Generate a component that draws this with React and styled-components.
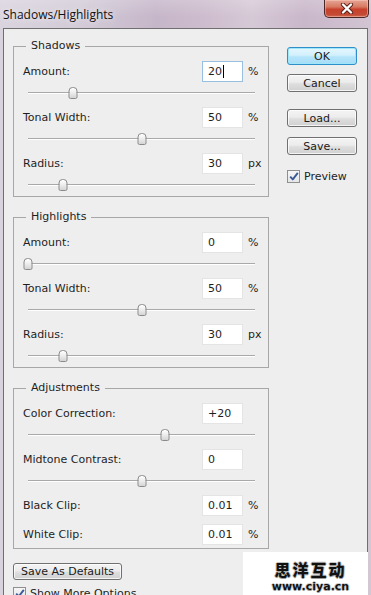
import React from 'react';
import styled, { createGlobalStyle } from 'styled-components';

const UI_FONT = `"DejaVu Sans", "Liberation Sans", sans-serif`;

const GlobalStyle = createGlobalStyle`
  html, body { margin: 0; padding: 0; }
  body {
    width: 371px;
    height: 595px;
    overflow: hidden;
    background: #d5cad6;
    font-family: ${UI_FONT};
  }
`;

const Window = styled.div`
  position: relative;
  width: 371px;
  height: 595px;
  display: flex;
  flex-direction: column;
  overflow: hidden;
  background: linear-gradient(90deg, #d8d2dc 0%, #d2c8d4 50%, #d3c7d4 100%);
`;

const TitleBar = styled.div`
  flex: none;
  height: 28px;
  display: flex;
  align-items: flex-start;
  justify-content: space-between;
  background:
    linear-gradient(180deg, rgba(255,255,255,0.18) 0%, rgba(255,255,255,0) 60%),
    linear-gradient(90deg, #d9d4de 0%, #d3ccd8 22%, #c6b6c9 42%, #cdbccd 55%, #d6c9d6 68%, #c9b7ca 82%, #d2c4d3 100%);
`;

const Title = styled.div`
  padding: 1px 0 0 3px;
  line-height: 28px;
  font-family: "Open Sans", "Liberation Sans", sans-serif;
  font-size: 12px;
  color: #111;
  text-shadow: 0 0 6px rgba(255, 255, 255, 0.9);
`;

const CloseButton = styled.div`
  width: 45px;
  height: 18px;
  margin-right: 2px;
  box-sizing: border-box;
  border: 1px solid #4a2626;
  border-top: none;
  border-radius: 0 0 5px 5px;
  background: linear-gradient(180deg, #e5a594 0%, #d87a63 40%, #c7412c 55%, #c44a34 85%, #d06a52 100%);
  box-shadow: inset 0 0 0 1px rgba(255, 210, 200, 0.45);
  display: flex;
  align-items: center;
  justify-content: center;
`;

const Frame = styled.div`
  flex: 1;
  display: flex;
  padding: 0 3px;
`;

const Panel = styled.div`
  flex: 1;
  display: flex;
  background: #eeeeee;
  border: 1px solid #6f6f6f;
  border-bottom: none;
`;

const MainColumn = styled.div`
  flex: none;
  display: flex;
  flex-direction: column;
  padding: 10px 0 0 9px;
`;

const Group = styled.fieldset`
  margin: 0;
  padding: 8px 0 ${(p) => p.$padBottom || 0}px 0;
  width: 256px;
  min-width: 0;
  box-sizing: border-box;
  border: 1px solid #a7a7a7;
  & + & { margin-top: 13px; }
`;

const Legend = styled.legend`
  margin-left: 12px;
  padding: 0 5px;
  font-size: 11px;
  line-height: 14px;
  color: #1e1e1e;
`;

const Row = styled.div`
  display: grid;
  grid-template-columns: 1fr 41px 16px;
  column-gap: 5px;
  align-items: center;
  height: 21px;
  padding: 0 4px 0 9px;
  font-size: 11px;
  color: #1e1e1e;
  & + & { margin-top: 8px; }
`;

const Label = styled.span`
  white-space: nowrap;
`;

const ValueBox = styled.div`
  height: 21px;
  box-sizing: border-box;
  display: flex;
  align-items: center;
  padding: 0 5px;
  background: #ffffff;
  border: 1px solid ${(p) => (p.$focused ? '#98bfe0' : '#e4e4e4')};
  font-size: 11px;
  color: #1e1e1e;
`;

const Caret = styled.span`
  display: inline-block;
  width: 1px;
  height: 13px;
  margin-left: 1px;
  background: #000;
`;

const Unit = styled.span`
  font-size: 11px;
`;

const Slider = styled.div`
  height: 25px;
  padding-top: 10px;
  box-sizing: border-box;
  &:last-child { height: 22px; }
`;

const Track = styled.div`
  position: relative;
  height: 1px;
  margin: 0 13px 0 14px;
  background: #a9a9a9;
  box-shadow: 0 1px 0 #ffffff;
`;

const Thumb = styled.div`
  position: absolute;
  top: -5px;
  width: 9px;
  height: 12px;
  transform: translateX(-50%);
  box-sizing: border-box;
  border: 1px solid #8a8a8a;
  border-radius: 4px 4px 2px 2px;
  background: linear-gradient(180deg, #ffffff 0%, #ececec 50%, #d4d4d4 100%);
`;

const Button = styled.button`
  display: block;
  margin: ${(p) => p.$mt || 0}px 0 0 0;
  width: ${(p) => p.$w || 70}px;
  height: ${(p) => p.$h || 18}px;
  padding: 0;
  box-sizing: border-box;
  font-family: ${UI_FONT};
  font-size: 11px;
  color: #1a1a1a;
  border-radius: 3px;
  border: 1px solid ${(p) => (p.$primary ? '#2f8fc8' : '#707070')};
  background: ${(p) =>
    p.$primary
      ? 'linear-gradient(180deg, #e6f7fe 0%, #d2f0fd 45%, #b6e5fb 55%, #a6dcf6 100%)'
      : 'linear-gradient(180deg, #f4f4f4 0%, #ececec 45%, #dedede 55%, #d0d0d0 100%)'};
  box-shadow: inset 0 0 0 1px ${(p) => (p.$primary ? '#9fe6fb' : 'rgba(255,255,255,0.75)')};
`;

const SideColumn = styled.div`
  flex: none;
  display: flex;
  flex-direction: column;
  width: 70px;
  margin-left: 18px;
  padding-top: 18px;
`;

const CheckRow = styled.div`
  display: flex;
  align-items: center;
  gap: 4px;
  margin-top: ${(p) => p.$mt || 0}px;
  font-size: 11px;
  color: #1e1e1e;
  white-space: nowrap;
`;

const CheckBox = styled.span`
  flex: none;
  width: 13px;
  height: 13px;
  box-sizing: border-box;
  border: 1px solid #8e8f8f;
  background: linear-gradient(180deg, #f6f6f6 0%, #e6e6e6 100%);
  display: flex;
  align-items: center;
  justify-content: center;
`;

const Watermark = styled.div`
  position: absolute;
  right: 3px;
  bottom: 0;
  width: 125px;
  height: 43px;
  background: #ffffff;
  display: flex;
  flex-direction: column;
  align-items: center;
  justify-content: flex-start;
  padding: 8px 0 0 10px;
  box-sizing: border-box;
`;

const WatermarkTitle = styled.div`
  font-family: "Noto Sans CJK SC", sans-serif;
  font-weight: 900;
  font-size: 16px;
  line-height: 18px;
  height: 18px;
  color: #111;
  letter-spacing: 2px;
  text-shadow: -1px 0 #c4c4c4, 1px 0 #c4c4c4, 0 -1px #c4c4c4, 0 1px #9a9a9a;
`;

const WatermarkUrl = styled.div`
  margin-top: 3px;
  font-family: "DejaVu Sans", sans-serif;
  font-weight: bold;
  font-size: 11px;
  line-height: 12px;
  height: 12px;
  color: #111;
  text-shadow: -1px 0 #d0d0d0, 1px 0 #d0d0d0, 0 -1px #d0d0d0, 0 1px #a0a0a0;
`;

const groups = [
  {
    title: 'Shadows',
    rows: [
      { label: 'Amount:', value: '20', unit: '%', pct: 20, focused: true },
      { label: 'Tonal Width:', value: '50', unit: '%', pct: 50 },
      { label: 'Radius:', value: '30', unit: 'px', pct: 15.3 },
    ],
  },
  {
    title: 'Highlights',
    rows: [
      { label: 'Amount:', value: '0', unit: '%', pct: 0 },
      { label: 'Tonal Width:', value: '50', unit: '%', pct: 50 },
      { label: 'Radius:', value: '30', unit: 'px', pct: 15.3 },
    ],
  },
  {
    title: 'Adjustments',
    padBottom: 3,
    rows: [
      { label: 'Color Correction:', value: '+20', unit: '', pct: 60.2 },
      { label: 'Midtone Contrast:', value: '0', unit: '', pct: 50 },
      { label: 'Black Clip:', value: '0.01', unit: '%' },
      { label: 'White Clip:', value: '0.01', unit: '%' },
    ],
  },
];

function CheckMark() {
  return (
    <svg width="10" height="9" viewBox="0 0 10 9">
      <path d="M1.2 4.6 L3.8 7.4 L8.8 0.9" fill="none" stroke="#3a5a9a" strokeWidth="1.9" strokeLinejoin="round" />
    </svg>
  );
}

function CloseGlyph() {
  return (
    <svg width="14" height="11" viewBox="0 0 14 11">
      <path d="M3 1.5 L11 9.5 M11 1.5 L3 9.5" stroke="#5a1e16" strokeWidth="4.2" strokeLinecap="round" />
      <path d="M3 1.5 L11 9.5 M11 1.5 L3 9.5" stroke="#ffffff" strokeWidth="2.4" strokeLinecap="round" />
    </svg>
  );
}

function Param({ row }) {
  return (
    <>
      <Row>
        <Label>{row.label}</Label>
        <ValueBox $focused={row.focused}>
          {row.value}
          {row.focused && <Caret />}
        </ValueBox>
        <Unit>{row.unit}</Unit>
      </Row>
      {row.pct !== undefined && (
        <Slider>
          <Track>
            <Thumb style={{ left: `${row.pct}%` }} />
          </Track>
        </Slider>
      )}
    </>
  );
}

export default function App() {
  return (
    <>
      <GlobalStyle />
      <Window>
        <TitleBar>
          <Title>Shadows/Highlights</Title>
          <CloseButton>
            <CloseGlyph />
          </CloseButton>
        </TitleBar>
        <Frame>
          <Panel>
            <MainColumn>
              {groups.map((g) => (
                <Group key={g.title} $padBottom={g.padBottom}>
                  <Legend>{g.title}</Legend>
                  {g.rows.map((r) => (
                    <Param key={r.label} row={r} />
                  ))}
                </Group>
              ))}
              <Button $mt={14} $w={109} $h={17}>Save As Defaults</Button>
              <CheckRow $mt={7}>
                <CheckBox>
                  <CheckMark />
                </CheckBox>
                Show More Options
              </CheckRow>
            </MainColumn>
            <SideColumn>
              <Button $primary>OK</Button>
              <Button $mt={9}>Cancel</Button>
              <Button $mt={17}>Load...</Button>
              <Button $mt={10}>Save...</Button>
              <CheckRow $mt={15}>
                <CheckBox>
                  <CheckMark />
                </CheckBox>
                Preview
              </CheckRow>
            </SideColumn>
          </Panel>
        </Frame>
        <Watermark>
          <WatermarkTitle>思洋互动</WatermarkTitle>
          <WatermarkUrl>www.ciya.cn</WatermarkUrl>
        </Watermark>
      </Window>
    </>
  );
}
